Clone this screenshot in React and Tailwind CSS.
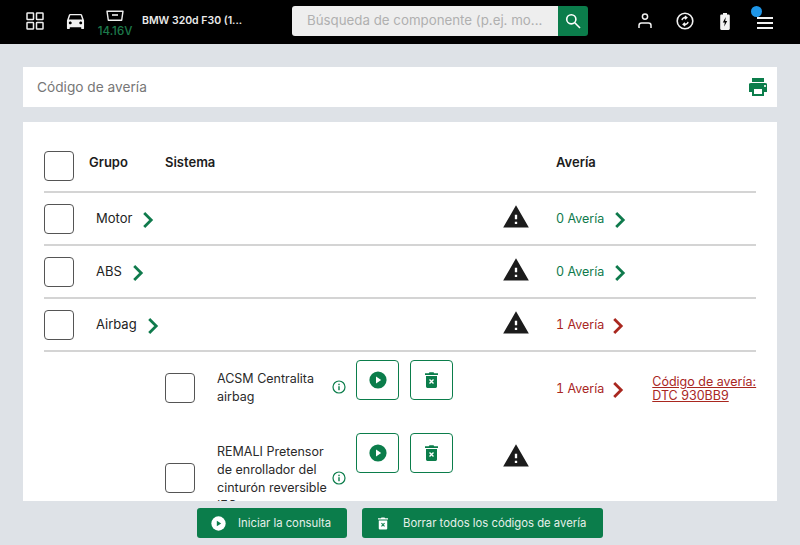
const G = "#0b7d4b";

function Chevron({ color = "#0f7a4c", className = "" }) {
  return (
    <svg width="12" height="18" viewBox="0 0 12 18" className={"mt-[3px] " + className} fill="none">
      <path d="M2.2 2 L9.2 9 L2.2 16" stroke={color} strokeWidth="2.8" />
    </svg>
  );
}
function Warn({ className = "" }) {
  return (
    <svg width="28" height="28" viewBox="0 0 24 24" className={className} fill="#1c1c1c">
      <path d="M1 21h22L12 2 1 21zm12-3h-2v-2h2v2zm0-4h-2v-4h2v4z" />
    </svg>
  );
}
function Box({ className = "" }) {
  return <div className={"w-[30px] h-[30px] shrink-0 rounded-[4px] border-[1.5px] border-[#555] bg-white " + className} />;
}
function Play({ size = 18, fg = "#ffffff", bg = G }) {
  return (
    <svg width={size} height={size} viewBox="0 0 18 18">
      <circle cx="9" cy="9" r="8.6" fill={bg} />
      <path d="M7 5.6 L12.2 9 L7 12.4 Z" fill={fg} />
    </svg>
  );
}
function Trash({ w = 13, h = 16, fg = "#ffffff", bg = G }) {
  return (
    <svg width={w} height={h} viewBox="0 0 13 16">
      <path d="M4.5 0.3h4l.7 1H13v1.6H0V1.3h3.8z" fill={bg} />
      <path d="M1 4h11v10.5a1.4 1.4 0 0 1-1.4 1.4H2.4A1.4 1.4 0 0 1 1 14.5z" fill={bg} />
      <path d="M4.5 7.6l4 4M8.5 7.6l-4 4" stroke={fg} strokeWidth="1.4" />
    </svg>
  );
}
function Info({ className = "" }) {
  return (
    <svg width="14" height="14" viewBox="0 0 14 14" className={className} fill="none">
      <circle cx="7" cy="7" r="6" stroke={G} strokeWidth="1.2" />
      <rect x="6.3" y="6.2" width="1.4" height="4" fill={G} />
      <rect x="6.3" y="3.7" width="1.4" height="1.5" fill={G} />
    </svg>
  );
}
function ActionBtn({ children }) {
  return (
    <div className="w-[43px] h-[40px] rounded-[4px] border-[1.5px] border-[#0b7d4b] flex items-center justify-center bg-white">
      {children}
    </div>
  );
}
function Row({ name, count, bad }) {
  const c = bad ? "text-[#a9271f]" : "text-[#0f7a4c]";
  return (
    <div className="h-[53px] flex items-center border-b-2 border-[#d4d4d4] shrink-0">
      <Box />
      <div className="w-[428px] shrink-0 pl-[22px] flex items-center text-[13px] text-[#222]">
        <span>{name}</span>
        <Chevron className="ml-[10px]" />
      </div>
      <div className="w-[54px] shrink-0 flex -mt-[4px]"><Warn /></div>
      <div className={"flex items-center text-[12.5px] tabular-nums " + c}>
        <span className="mt-[1px]">{count}</span>
        <Chevron color={bad ? "#a9271f" : "#0f7a4c"} className={bad ? "ml-[8px]" : "ml-[10px]"} />
      </div>
    </div>
  );
}

export default function App() {
  return (
    <div className="w-[800px] h-[545px] overflow-hidden flex flex-col bg-[#dee2e7] font-['Inter',sans-serif]">
      <header className="h-[44px] bg-black flex items-center shrink-0 relative pb-[2px]">
        <svg width="18" height="18" viewBox="0 0 18 18" className="ml-[26px]" fill="none" stroke="#eee" strokeWidth="1.5">
          <rect x="1" y="1" width="6.5" height="6.5" rx="0.6" />
          <rect x="10.5" y="1" width="6.5" height="6.5" rx="0.6" />
          <rect x="1" y="10.5" width="6.5" height="6.5" rx="0.6" />
          <rect x="10.5" y="10.5" width="6.5" height="6.5" rx="0.6" />
        </svg>
        <svg width="19" height="19" viewBox="2 3 20 20" className="ml-[22px]" fill="#f2f2f2">
          <path d="M18.92 6.01C18.72 5.42 18.16 5 17.5 5h-11c-.66 0-1.21.42-1.42 1.01L3 12v8c0 .55.45 1 1 1h1c.55 0 1-.45 1-1v-1h12v1c0 .55.45 1 1 1h1c.55 0 1-.45 1-1v-8l-2.08-5.99zM6.5 16c-.83 0-1.5-.67-1.5-1.5S5.67 13 6.5 13s1.5.67 1.5 1.5S7.33 16 6.5 16zm11 0c-.83 0-1.5-.67-1.5-1.5s.67-1.5 1.5-1.5 1.5.67 1.5 1.5-.67 1.5-1.5 1.5zM5 11l1.5-4.5h11L19 11H5z" />
        </svg>
        <div className="ml-[9px] w-[42px] mt-[5px] flex flex-col items-center">
          <svg width="18" height="12" viewBox="0 0 18 12" fill="none">
            <path d="M1 1.2h16l-1.3 9H2.3z" stroke="#eee" strokeWidth="1.4" strokeLinejoin="round" />
            <path d="M6 5h6" stroke="#eee" strokeWidth="1.6" />
          </svg>
          <span className="text-[11.5px] leading-[12px] mt-[3px] font-medium text-[#1d7a4b]">14.16V</span>
        </div>
        <span className="ml-[6px] w-[150px] shrink-0 text-[10.5px] font-semibold text-[#eaeaea]">BMW 320d F30 (1...</span>
        <div className="flex w-[296px] h-[30px] shrink-0">
          <div className="w-[266px] bg-[#eeeeee] rounded-l-[3px] pl-[15px] flex items-center text-[13.3px] text-[#b0b0b0]">Búsqueda de componente (p.ej. mo...</div>
          <div className="w-[30px] bg-[#0b7d4b] rounded-r-[3px] flex items-center justify-center">
            <svg width="16" height="16" viewBox="0 0 16 16" fill="none" stroke="#fff" strokeWidth="1.6">
              <circle cx="6.3" cy="6.3" r="4.6" />
              <path d="M9.8 9.8 L15 15" />
            </svg>
          </div>
        </div>
        <svg width="14" height="16" viewBox="0 0 14 16" className="ml-[50px]" fill="none" stroke="#f2f2f2" strokeWidth="1.5">
          <circle cx="7" cy="3.6" r="2.6" />
          <path d="M1 15v-2.5c0-1.4 1-2.5 2.5-2.5h7c1.5 0 2.5 1.1 2.5 2.5V15" />
        </svg>
        <svg width="18" height="18" viewBox="0 0 18 18" className="ml-[24px]" fill="none" stroke="#f2f2f2">
          <circle cx="9" cy="9" r="7.8" strokeWidth="1.6" />
          <path d="M6 8.2c.2-1.8 1.8-3 4-2.6M8.8 4l2 1.6-1.7 1.7M12 9.8c-.2 1.8-1.8 3-4 2.6M9.2 14l-2-1.6 1.7-1.7" strokeWidth="1.4" />
        </svg>
        <svg width="10" height="17" viewBox="0 0 10 17" className="ml-[26px]">
          <path d="M3 0h4v1.6h1.6c.6 0 1.2.5 1.2 1.2v13c0 .7-.6 1.2-1.2 1.2H1.4C.8 17 .2 16.500 .2 15.800v-13c0-.7.6-1.2 1.200-1.200H3z" fill="#f2f2f2" />
          <path d="M5.800 4 L2.800 9.400H4.800L4.200 13.500 7.200 8H5.200z" fill="#000" />
        </svg>
        <div className="ml-[27px] mt-[3px] w-[16px] flex flex-col gap-[3px]">
          <div className="h-[2px] bg-[#f2f2f2]" />
          <div className="h-[2px] bg-[#f2f2f2]" />
          <div className="h-[2px] bg-[#f2f2f2]" />
        </div>
        <div className="absolute left-[751px] top-[6px] w-[11px] h-[11px] rounded-full bg-[#1e96e8]" />
      </header>

      <div className="mt-[23px] mx-[23px] h-[40px] bg-white shrink-0 flex items-center justify-between pl-[14px] pr-[10px]">
        <span className="text-[13.7px] text-[#777]">Código de avería</span>
        <svg width="18" height="18" viewBox="3 3 18 18" fill={G}>
          <path d="M19 8H5c-1.660 0-3 1.340-3 3v6h4v4h12v-4h4v-6c0-1.660-1.340-3-3-3zm-3 11H8v-5h8v5zm3-7c-.55 0-1-.45-1-1s.45-1 1-1 1 .45 1 1-.45 1-1 1zm-1-9H6v4h12V3z" />
        </svg>
      </div>

      <div className="mt-[15px] mx-[23px] h-[379px] bg-white shrink-0 overflow-hidden px-[21px] pt-[29px]">
        <div className="h-[42px] flex items-start border-b-2 border-[#d4d4d4] text-[13px] font-semibold text-[#1c1c1c]">
          <Box />
          <span className="ml-[15px] w-[76px] mt-[2px]">Grupo</span>
          <span className="w-[391px] mt-[2px]">Sistema</span>
          <span className="mt-[2px]">Avería</span>
        </div>
        <Row name="Motor" count="0 Avería" />
        <Row name="ABS" count="0 Avería" />
        <Row name="Airbag" count="1 Avería" bad />

        <div className="flex h-[81px] items-start">
          <div className="w-[121px] shrink-0" />
          <Box className="mt-[21px]" />
          <div className="w-[115px] shrink-0 ml-[22px] mt-[18px] pr-[4px] text-[12.5px] leading-[18px] text-[#2a2a2a]">ACSM Centralita airbag</div>
          <Info className="mt-[28px] shrink-0" />
          <div className="flex gap-[11px] ml-[10px] mt-[8px] shrink-0">
            <ActionBtn><Play /></ActionBtn>
            <ActionBtn><Trash /></ActionBtn>
          </div>
          <div className="w-[103px] shrink-0" />
          <div className="flex items-center text-[12.5px] tabular-nums text-[#a9271f] mt-[26px] shrink-0">
            <span className="mt-[1px]">1 Avería</span>
            <Chevron color="#a9271f" className="ml-[8px]" />
          </div>
          <a className="ml-[28px] mt-[23px] text-[12.5px] leading-[14px] text-[#a9271f] underline whitespace-nowrap">Código de avería:<br />DTC 930BB9</a>
        </div>

        <div className="flex items-start">
          <div className="w-[121px] shrink-0" />
          <Box className="mt-[30px]" />
          <div className="w-[115px] shrink-0 ml-[22px] mt-[10px] text-[12.5px] leading-[18px] text-[#2a2a2a]">REMALI Pretensor de enrollador del cinturón reversible IFG</div>
          <Info className="mt-[38px] shrink-0" />
          <div className="flex gap-[11px] ml-[10px] shrink-0">
            <ActionBtn><Play /></ActionBtn>
            <ActionBtn><Trash /></ActionBtn>
          </div>
          <Warn className="ml-[49px] mt-[9px]" />
        </div>
      </div>

      <div className="flex-1 flex items-center justify-center gap-[15px]">
        <div className="w-[150px] h-[30px] rounded-[3px] bg-[#0b7d4b] flex items-center pl-[14px] text-[11.3px] text-[#e6f0ea]">
          <Play size={15} fg="#0b7d4b" bg="#ffffff" />
          <span className="ml-[12px]">Iniciar la consulta</span>
        </div>
        <div className="w-[241px] h-[30px] rounded-[3px] bg-[#0b7d4b] flex items-center pl-[16px] text-[11.3px] text-[#e6f0ea]">
          <Trash w={10} h={13} fg="#0b7d4b" bg="#ffffff" />
          <span className="ml-[15px]">Borrar todos los códigos de avería</span>
        </div>
      </div>
    </div>
  );
}
